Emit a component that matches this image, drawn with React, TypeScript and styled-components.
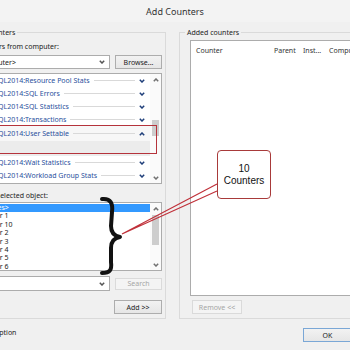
import styled, { createGlobalStyle } from "styled-components";

const GlobalStyle = createGlobalStyle`
  html, body {
    margin: 0;
    padding: 0;
    width: 350px;
    height: 350px;
    overflow: hidden;
    background: #f0f0f0;
  }
  body {
    font-family: "Noto Sans", "Open Sans", sans-serif;
    color: #222;
  }
`;

const counters = [
  { name: "MSSQL$SQL2014:Resource Pool Stats" },
  { name: "MSSQL$SQL2014:SQL Errors" },
  { name: "MSSQL$SQL2014:SQL Statistics" },
  { name: "MSSQL$SQL2014:Transactions" },
  { name: "MSSQL$SQL2014:User Settable", expanded: true },
  { name: "MSSQL$SQL2014:Wait Statistics" },
  { name: "MSSQL$SQL2014:Workload Group Stats" },
];

const instances = [
  "<All instances>",
  "User counter 1",
  "User counter 10",
  "User counter 2",
  "User counter 3",
  "User counter 4",
  "User counter 5",
  "User counter 6",
];

const Chevron = ({ up, color = "#1f3f7a" }: { up?: boolean; color?: string }) => (
  <svg width={6} height={4} viewBox="0 0 6 4">
    <path
      d={up ? "M0.8 3.3 L3 1 L5.2 3.3" : "M0.8 0.8 L3 3 L5.2 0.8"}
      fill="none"
      stroke={color}
      strokeWidth={1.5}
    />
  </svg>
);

const ScrollBar = ({ thumbTop, thumbHeight }: { thumbTop: number; thumbHeight: number }) => (
  <Scroll>
    <ScrollArrow>
      <Chevron up color="#707070" />
    </ScrollArrow>
    <ScrollTrack>
      <Thumb style={{ marginTop: thumbTop, height: thumbHeight }} />
    </ScrollTrack>
    <ScrollArrow>
      <Chevron color="#707070" />
    </ScrollArrow>
  </Scroll>
);

const App = () => {
  return (
    <Page>
      <GlobalStyle />
      <Window>
        <TitleBar>Add Counters</TitleBar>
        <Content>
          <Panels>
            <GroupBox $width={217} $padLeft={5}>
              <Legend $shift={-2}>Available counters</Legend>
              <Label $mt={5}>Select counters from computer:</Label>
              <ControlRow $mt={4}>
                <Combo $height={14}>
                  <span>&lt;Local computer&gt;</span>
                  <Chevron color="#555" />
                </Combo>
                <Button $width={47}>Browse...</Button>
              </ControlRow>
              <ListBox $mt={4} $height={111}>
                <CounterRows>
                  {counters.map((c) => (
                    <div key={c.name}>
                      <CounterRow $expanded={c.expanded}>
                        <span>{c.name}</span>
                        <Rule />
                        <Chevron up={c.expanded} />
                      </CounterRow>
                      {c.expanded && <SubRow />}
                    </div>
                  ))}
                </CounterRows>
                <ScrollBar thumbTop={35} thumbHeight={16} />
              </ListBox>
              <Label $mt={7}>Instances of selected object:</Label>
              <ListBox $mt={2} $height={69}>
                <InstanceRows>
                  {instances.map((name, i) => (
                    <InstanceRow key={name} $selected={i === 0}>
                      {name}
                    </InstanceRow>
                  ))}
                </InstanceRows>
                <ScrollBar thumbTop={1} thumbHeight={30} />
              </ListBox>
              <ControlRow $mt={5}>
                <Combo $height={15}>
                  <span />
                  <Chevron color="#555" />
                </Combo>
                <Button $width={47} $height={12} disabled>
                  Search
                </Button>
              </ControlRow>
              <ButtonRow $mt={9} $align="flex-end">
                <Button $width={48}>Add &gt;&gt;</Button>
              </ButtonRow>
            </GroupBox>
            <GroupBox $padLeft={10} $grow>
              <Legend $shift={-5}>Added counters</Legend>
              <Table>
                <TableHead>
                  <HeadCell $pad={5}>Counter</HeadCell>
                  <HeadCell>Parent</HeadCell>
                  <HeadCell>Inst...</HeadCell>
                  <HeadCell>Computer</HeadCell>
                </TableHead>
              </Table>
              <ButtonRow $mt={4} $align="flex-start">
                <Button $width={50} disabled style={{ marginLeft: 2 }}>
                  Remove &lt;&lt;
                </Button>
              </ButtonRow>
            </GroupBox>
          </Panels>
        </Content>
        <Footer>
          <CheckLabel>
            <CheckBox />
            Show description
          </CheckLabel>
          <FooterButtons>
            <Button $width={49} $height={14} $primary>
              OK
            </Button>
            <Button $width={49} $height={14}>
              Cancel
            </Button>
          </FooterButtons>
        </Footer>
      </Window>

      <RedFrame />
      <Annotations width={350} height={350} viewBox="0 0 350 350">
        <path d="M217 184 L122 234 L217 191" fill="none" stroke="#c0313a" strokeWidth={1.2} />
        <path
          d="M102 199 C111 198 113 204 112 212 L111 226 C111 232 114 236 120 237 C114 238 111 242 111 248 L111 262 C112 270 110 273 102 273"
          fill="none"
          stroke="#111"
          strokeWidth={4}
          strokeLinecap="round"
          strokeLinejoin="round"
        />
      </Annotations>
      <Callout>
        <span>10</span>
        <span>Counters</span>
      </Callout>
    </Page>
  );
};

const Page = styled.div`
  position: relative;
  width: 350px;
  height: 350px;
  overflow: hidden;
`;

const Window = styled.div`
  width: 476px;
  height: 350px;
  margin-left: -63px;
  display: flex;
  flex-direction: column;
  background: #f0f0f0;
`;

const TitleBar = styled.div`
  height: 22px;
  flex-shrink: 0;
  display: flex;
  align-items: center;
  justify-content: center;
  font-size: 9px;
  color: #333;
  background: #f3f3f3;
`;

const Content = styled.div`
  padding: 6px 12px 0;
`;

const Panels = styled.div`
  display: flex;
  gap: 13px;
  align-items: stretch;
`;

const GroupBox = styled.fieldset<{ $width?: number; $padLeft: number; $grow?: boolean }>`
  margin: 0;
  min-width: 0;
  box-sizing: border-box;
  width: ${(p) => (p.$width ? `${p.$width}px` : "auto")};
  flex: ${(p) => (p.$grow ? 1 : "none")};
  padding: 0 3px 4px ${(p) => p.$padLeft}px;
  border: 1px solid #dadada;
  display: flex;
  flex-direction: column;
`;

const Legend = styled.legend<{ $shift: number }>`
  margin-left: ${(p) => p.$shift}px;
  font-size: 7px;
  line-height: 9px;
  padding: 0 2px;
  color: #222;
`;

const Label = styled.div<{ $mt: number }>`
  margin-top: ${(p) => p.$mt}px;
  font-size: 7px;
  line-height: 9px;
  white-space: nowrap;
`;

const ControlRow = styled.div<{ $mt: number }>`
  margin-top: ${(p) => p.$mt}px;
  display: flex;
  align-items: center;
  gap: 5px;
`;

const Combo = styled.div<{ $height: number }>`
  flex: 1;
  height: ${(p) => p.$height}px;
  box-sizing: border-box;
  border: 1px solid #acacac;
  background: #fff;
  display: flex;
  align-items: center;
  justify-content: space-between;
  padding: 0 4px 0 1px;
  font-size: 7px;
  white-space: nowrap;
`;

const Button = styled.button<{ $width: number; $height?: number; $primary?: boolean }>`
  width: ${(p) => p.$width}px;
  height: ${(p) => p.$height ?? 14}px;
  flex-shrink: 0;
  padding: 0;
  font-family: inherit;
  font-size: 7px;
  color: #222;
  border: 1px solid ${(p) => (p.$primary ? "#7aa7d6" : "#adadad")};
  background: linear-gradient(#f2f2f2, #e6e6e6);

  &:disabled {
    color: #a6a6a6;
    border-color: #dadada;
    background: #f4f4f4;
  }
`;

const ListBox = styled.div<{ $mt: number; $height: number }>`
  margin-top: ${(p) => p.$mt}px;
  height: ${(p) => p.$height}px;
  box-sizing: border-box;
  border: 1px solid #acacac;
  background: #fff;
  display: flex;
  overflow: hidden;
`;

const CounterRows = styled.div`
  flex: 1;
  min-width: 0;
  display: flex;
  flex-direction: column;
`;

const CounterRow = styled.div<{ $expanded?: boolean }>`
  height: ${(p) => (p.$expanded ? 15 : 13)}px;
  display: flex;
  align-items: center;
  padding: 0 5px 0 11px;
  font-size: 7px;
  color: #2a4f9c;
  white-space: nowrap;
  background: ${(p) => (p.$expanded ? "#f7f7f7" : "transparent")};
`;

const Rule = styled.div`
  flex: 1;
  border-top: 1px solid #d9d9d9;
  margin: 0 4px;
`;

const SubRow = styled.div`
  height: 15px;
  background: #ececec;
`;

const InstanceRows = styled.div`
  flex: 1;
  min-width: 0;
  display: flex;
  flex-direction: column;
  padding-top: 1px;
`;

const InstanceRow = styled.div<{ $selected?: boolean }>`
  height: 8.4px;
  line-height: 8.4px;
  flex-shrink: 0;
  font-size: 7px;
  padding-left: 4px;
  white-space: nowrap;
  color: ${(p) => (p.$selected ? "#fff" : "#222")};
  background: ${(p) => (p.$selected ? "#3399ff" : "transparent")};
`;

const Scroll = styled.div`
  width: 11px;
  flex-shrink: 0;
  display: flex;
  flex-direction: column;
  background: #fafafa;
`;

const ScrollArrow = styled.div`
  height: 11px;
  display: flex;
  align-items: center;
  justify-content: center;
`;

const ScrollTrack = styled.div`
  flex: 1;
  display: flex;
  flex-direction: column;
  padding: 0 2px;
`;

const Thumb = styled.div`
  background: #cdcdcd;
`;

const ButtonRow = styled.div<{ $mt: number; $align: string }>`
  margin-top: ${(p) => p.$mt}px;
  display: flex;
  justify-content: ${(p) => p.$align};
`;

const Table = styled.div`
  flex: 1;
  margin-top: 3px;
  border: 1px solid #acacac;
  background: #fff;
`;

const TableHead = styled.div`
  display: grid;
  grid-template-columns: 79px 29px 26px 1fr;
  height: 18px;
  font-size: 7px;
  color: #333;
`;

const HeadCell = styled.div<{ $pad?: number }>`
  display: flex;
  align-items: center;
  padding-left: ${(p) => p.$pad ?? 4}px;
  white-space: nowrap;
  overflow: hidden;
`;

const Footer = styled.div`
  flex: 1;
  display: flex;
  justify-content: space-between;
  align-items: flex-start;
  padding: 8px 6px 0 10px;
`;

const CheckLabel = styled.div`
  display: flex;
  align-items: center;
  gap: 3px;
  font-size: 7px;
  line-height: 9px;
  white-space: nowrap;
`;

const CheckBox = styled.span`
  width: 8px;
  height: 8px;
  border: 1px solid #8f8f8f;
  background: #fff;
`;

const FooterButtons = styled.div`
  display: flex;
  gap: 6px;
  margin-top: 1px;
`;

const RedFrame = styled.div`
  position: absolute;
  left: -5px;
  top: 125px;
  width: 162px;
  height: 29px;
  box-sizing: border-box;
  border: 1.5px solid #b5333b;
`;

const Annotations = styled.svg`
  position: absolute;
  left: 0;
  top: 0;
  pointer-events: none;
`;

const Callout = styled.div`
  position: absolute;
  left: 217px;
  top: 150px;
  width: 54px;
  height: 49px;
  box-sizing: border-box;
  border: 1.5px solid #a83a3a;
  border-radius: 4px;
  background: #fff;
  display: flex;
  flex-direction: column;
  align-items: center;
  justify-content: center;
  font-family: "Liberation Sans", Arial, sans-serif;
  font-size: 10px;
  line-height: 12px;
  color: #111;
`;

export default App;
